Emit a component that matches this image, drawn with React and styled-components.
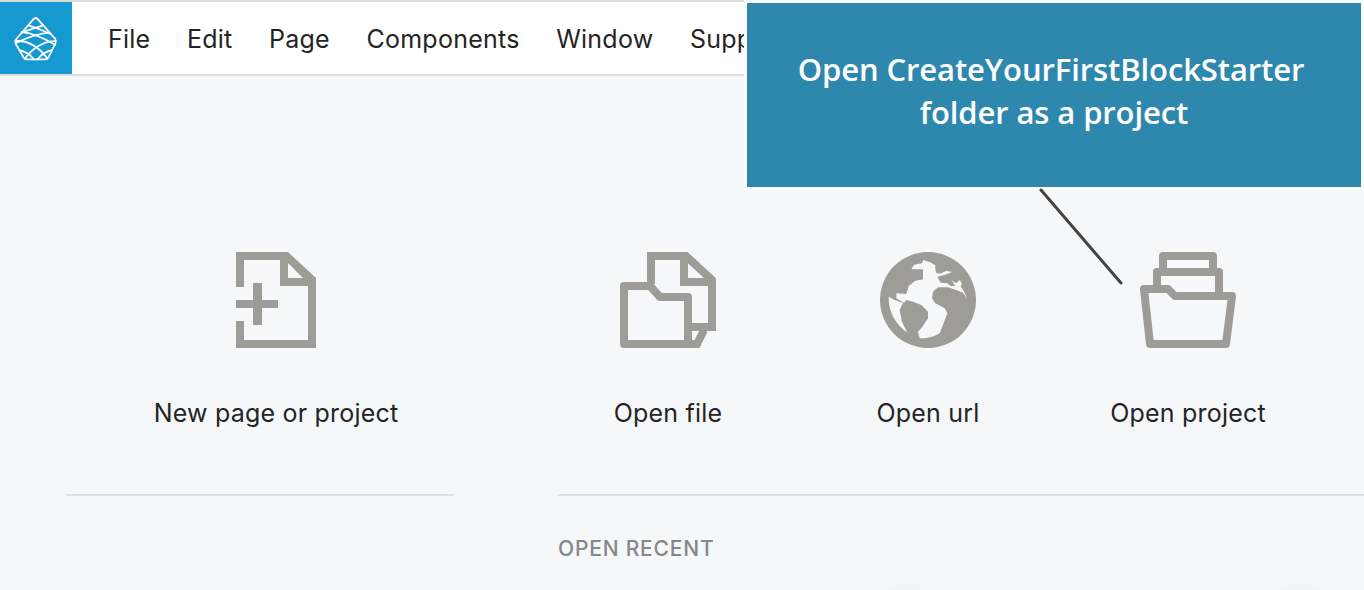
import styled, { createGlobalStyle } from "styled-components";

const GRAY = "#9d9c98";
const BG = "#f6f7f9";

const Global = createGlobalStyle`
    html, body {
        margin: 0;
        padding: 0;
        height: 590px;
        overflow: hidden;
        background: ${BG};
    }
    body {
        font-family: "Inter", "Liberation Sans", sans-serif;
        color: #222;
    }
`;

const Page = styled.div`
    position: relative;
    height: 590px;
    overflow: hidden;
`;

const TopBar = styled.header`
    display: flex;
    align-items: center;
    height: 72px;
    background: #fff;
    border-top: 2px solid #dcdcdc;
    border-bottom: 2px solid #dcdee0;
`;

const LogoBox = styled.div`
    display: flex;
    align-items: center;
    justify-content: center;
    width: 72px;
    height: 72px;
    background: #1698d1;
`;

const Menu = styled.nav`
    display: flex;
    gap: 36.5px;
    margin: 2px 0 0 36px;
`;

const MenuItem = styled.span`
    font-size: 25px;
    line-height: 30px;
    letter-spacing: 0.25px;
    color: #242424;
`;

const Columns = styled.main`
    display: flex;
    padding: 176px 0 0 66px;
`;

const LeftColumn = styled.section`
    flex: none;
    width: 388px;
    margin-right: 104px;
`;

const RightColumn = styled.section`
    flex: 1;
`;

const Tiles = styled.div`
    display: flex;
    gap: 40px;
    padding-left: ${(p) => p.$inset || 0}px;
    padding-bottom: 66px;
    border-bottom: 2px solid #dcdfe3;
`;

const Tile = styled.div`
    display: flex;
    flex-direction: column;
    align-items: center;
    width: 220px;
`;

const TileIcon = styled.svg`
    display: block;
    width: ${(p) => p.$w || 96}px;
    height: 96px;
    margin-bottom: 50px;
`;

const TileLabel = styled.div`
    font-size: 25px;
    line-height: 30px;
    letter-spacing: 0.2px;
    color: #242424;
    white-space: nowrap;
`;

const RecentTitle = styled.h2`
    margin: 40px 0 0;
    font-size: 21px;
    line-height: 26px;
    font-weight: 500;
    letter-spacing: 0.8px;
    color: #878787;
`;

const RecentRow = styled.div`
    display: flex;
    gap: 345px;
    margin-top: 31px;
    padding-left: 322px;
`;

const RecentCard = styled.div`
    width: 50px;
    height: 40px;
    border-radius: 50%;
    box-shadow: 0 0 16px rgba(0, 0, 0, 0.08);
`;

const Callout = styled.div`
    position: absolute;
    left: 747px;
    top: 3px;
    box-sizing: border-box;
    width: 614px;
    height: 184px;
    padding-top: 45px;
    background: #2e88ae;
    outline: 3px solid #fbfcfc;
    color: #fff;
    font-family: "Open Sans", "Liberation Sans", sans-serif;
    font-size: 31px;
    font-weight: 600;
    line-height: 43px;
    letter-spacing: -0.1px;
    text-align: center;
`;

const CalloutLine = styled.div`
    padding-right: ${(p) => p.$pull || 0}px;
`;

const Pointer = styled.svg`
    position: absolute;
    left: 1036px;
    top: 186px;
`;

const Logo = () => (
    <svg width="50" height="50" viewBox="3 -3 150 150" fill="none" stroke="#fff" strokeWidth="5" strokeLinejoin="round" strokeLinecap="round">
        <g transform="translate(0 -1.2) scale(1 1.1)">
            <path d="M72 14Q77 10 82 14L135 68Q140 75 136 82L115 120Q112 125 106 125L50 125Q44 125 41 120L17 82Q13 75 20 68Z" />
            <path d="M55 32Q85 40 120 55M35 50Q80 55 135 85M18 75Q70 72 112 122M28 100Q55 105 72 125" />
            <path d="M100 32Q70 40 35 52M120 52Q75 55 18 80M137 75Q85 75 45 122M125 100Q100 105 82 125" />
        </g>
    </svg>
);

const NewPageIcon = () => (
    <TileIcon $w={80} viewBox="0 0 80 96">
        <path
            fill={GRAY}
            fillRule="evenodd"
            d="M0 0H52L80 26V96H0V69H8V88H72V34H44V8H8V35H0ZM52 11V26H67ZM0 48H17V31H26V48H42V56H26V73H17V56H0Z"
        />
    </TileIcon>
);

const OpenFileIcon = () => (
    <TileIcon viewBox="0 0 96 96" fill="none" stroke={GRAY} strokeWidth="8">
        <path d="M31 32V4H66L92 28V75H70" />
        <path d="M64 5V30H92" />
        <path d="M4 34H30L40 45H68V92H4Z" strokeLinejoin="round" />
        <path d="M84 78L77 92H68" />
    </TileIcon>
);

// continents are the disc, the oceans are cut out in the page colour
const GlobeIcon = () => (
    <TileIcon viewBox="6 6 288 288">
        <circle cx="150" cy="150" r="144" fill={GRAY} />
        <path
            fill={BG}
            d="M100 58L108 44L132 40L136 30L160 38L172 46L172 60L176 70L190 70L205 62L222 66L200 75L178 80L188 98L208 100L218 108L232 108L222 92L235 100L245 90L252 100L248 110L255 118L268 148L255 128L235 120L210 112L180 112L165 125L162 145L172 160L200 175L208 190L195 225L185 250C170 260 145 266 125 265L120 245L130 235L150 205L150 185L130 165L105 155L85 150L78 158L55 145L55 130L85 132L92 108L112 92L135 88L135 58Z"
        />
        <path fill={BG} d="M32 140L50 150L75 158L65 180L72 215L88 248C55 225 30 185 32 140Z" />
        <path fill={GRAY} d="M176 60L186 57L190 64L182 72Z" />
    </TileIcon>
);

const OpenProjectIcon = () => (
    <TileIcon viewBox="0 0 96 96" fill="none" stroke={GRAY} strokeWidth="8" strokeLinejoin="round">
        <path d="M23 18V4H73V18" />
        <path d="M17 36V20H79V40" />
        <path d="M4 37H28L35 44H92L86 92H10Z" />
    </TileIcon>
);

const menuItems = ["File", "Edit", "Page", "Components", "Window", "Support"];

const App = () => (
    <Page>
        <Global />
        <TopBar>
            <LogoBox>
                <Logo />
            </LogoBox>
            <Menu>
                {menuItems.map((item) => (
                    <MenuItem key={item}>{item}</MenuItem>
                ))}
            </Menu>
        </TopBar>
        <Columns>
            <LeftColumn>
                <Tiles $inset={100}>
                    <Tile>
                        <NewPageIcon />
                        <TileLabel>New page or project</TileLabel>
                    </Tile>
                </Tiles>
            </LeftColumn>
            <RightColumn>
                <Tiles>
                    <Tile>
                        <OpenFileIcon />
                        <TileLabel>Open file</TileLabel>
                    </Tile>
                    <Tile>
                        <GlobeIcon />
                        <TileLabel>Open url</TileLabel>
                    </Tile>
                    <Tile>
                        <OpenProjectIcon />
                        <TileLabel>Open project</TileLabel>
                    </Tile>
                </Tiles>
                <RecentTitle>OPEN RECENT</RecentTitle>
                <RecentRow>
                    <RecentCard />
                    <RecentCard />
                </RecentRow>
            </RightColumn>
        </Columns>
        <Callout>
            <CalloutLine $pull={6}>Open CreateYourFirstBlockStarter</CalloutLine>
            <CalloutLine>folder as a project</CalloutLine>
        </Callout>
        <Pointer width="90" height="100" viewBox="0 0 90 100">
            <line x1="5" y1="4" x2="85" y2="97" stroke="#444" strokeWidth="3" strokeLinecap="round" />
        </Pointer>
    </Page>
);

export default App;
